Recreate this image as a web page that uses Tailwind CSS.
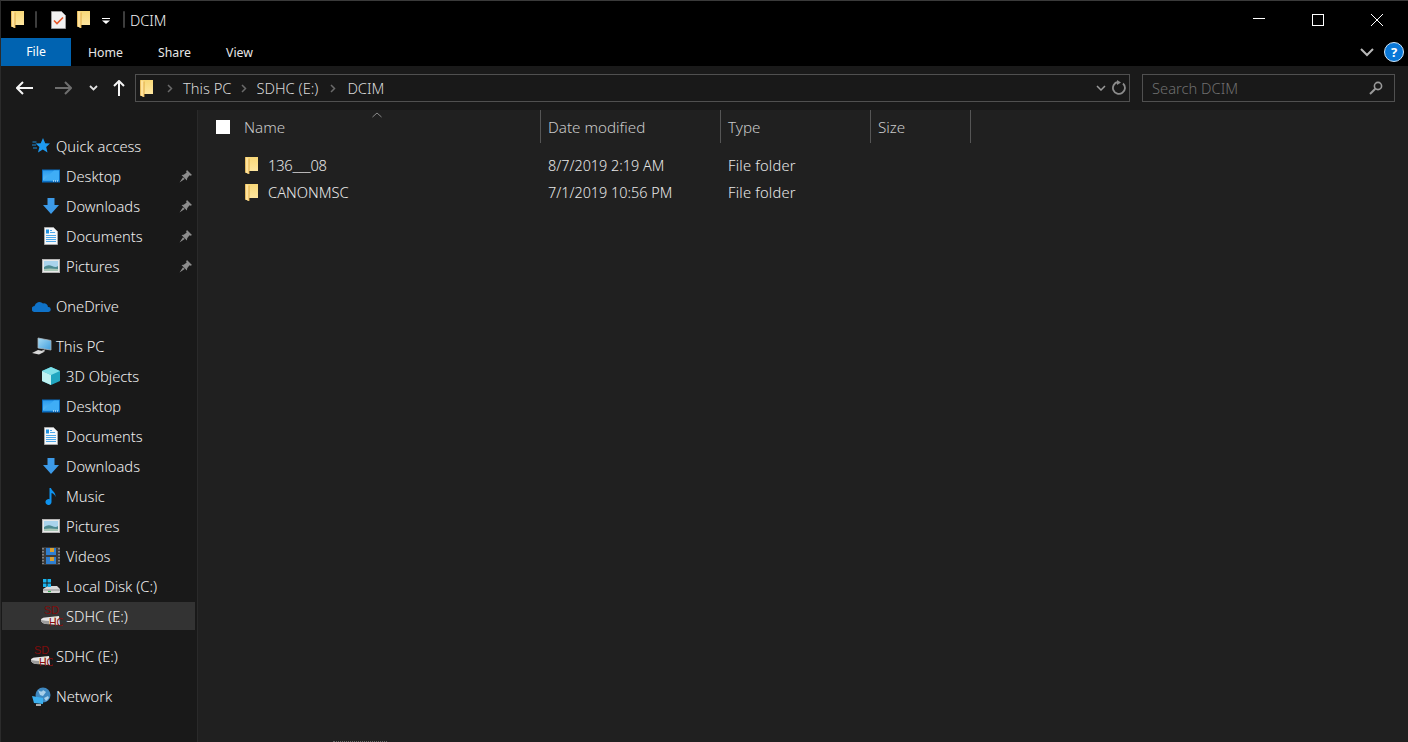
<!DOCTYPE html>
<html lang="en">
<head>
<meta charset="utf-8">
<script src="https://cdn.jsdelivr.net/npm/@tailwindcss/browser@4"></script>
<title>DCIM</title>
</head>
<body class="bg-black">
<svg width="0" height="0" class="absolute">
  <defs>
    <linearGradient id="fg" x1="0" y1="0" x2="0" y2="1"><stop offset="0" stop-color="#f8d878"/><stop offset="1" stop-color="#ffe9a8"/></linearGradient>
    <linearGradient id="dg" x1="0" y1="0" x2="0" y2="1"><stop offset="0" stop-color="#2a9cf0"/><stop offset="1" stop-color="#5cbcf8"/></linearGradient>
    <linearGradient id="pc" x1="0" y1="0" x2="1" y2="1"><stop offset="0" stop-color="#a8dcf4"/><stop offset="1" stop-color="#3f9ede"/></linearGradient>
    <symbol id="folder" viewBox="0 0 13 17"><path d="M0 .5L1 0h12v14H4v3l-3.500-1.500z" fill="url(#fg)"/><path d="M.5 0L4 1.500V17L.5 15.500z" fill="#ffe29a"/><path d="M4 1.500V17" stroke="#dca63e" stroke-width=".9"/><path d="M.5 0v15.500" stroke="#e4b654" stroke-width=".8"/></symbol>
    <symbol id="desk" viewBox="0 0 18 14"><rect width="18" height="13" y=".5" fill="#0b6fc4"/><rect x="1" y="1.500" width="16" height="10" fill="url(#dg)"/><path d="M1 11.500L12 1.500h5v10z" fill="#3fadf6"/><path d="M11 12h1M13 12h1M15 12h1" stroke="#fff" stroke-width="1"/></symbol>
    <symbol id="down" viewBox="0 0 18 16"><path d="M5.500 0h7v7H17l-8 9-8-9h4.500z" fill="#3c9ae8"/></symbol>
    <symbol id="docs" viewBox="0 0 14 18"><path d="M.5.500h9l4 4v13H.500z" fill="#f4f7fa" stroke="#a8a8a8"/><path d="M6 3.500h2M6 5.500h5M2 8.500h10M2 10.500h10M2 12.500h10M2 14.500h10" stroke="#3a9ee8" stroke-width=".9"/><path d="M2 2.500h3v4H2z" fill="#1e90e0"/></symbol>
    <symbol id="pics" viewBox="0 0 18 14"><rect x=".5" y=".5" width="17" height="13" fill="#e8e8e8" stroke="#b4b4b4"/><rect x="2" y="2" width="14" height="10" fill="#a9d3ec"/><path d="M2 8q4-3 8-1t6 0v5H2z" fill="#4d8a90"/><path d="M2 10q5-1 14 0v2H2z" fill="#a7c6b5"/></symbol>
    <symbol id="pin" viewBox="0 0 13 13"><path d="M8 0l5 5-1.500.8-1-.6L8.200 8.300l-.3 2.200L2.500 5l2.200-.3L7.700 2.500l-.6-1zM4 7.300L.5 12.500l5.200-3.500z" fill="#8d8d8d"/></symbol>
    <symbol id="sd" viewBox="0 0 22 24"><path d="M0 16q0-2 4-2.500L18 12l1 9-14-1q-5-1-5-4z" fill="#e6e6e6"/><path d="M0 16q5 1 8 1v3H5q-5-1-5-4z" fill="#9c9c9c"/><path d="M14 12.500v8" stroke="#c9a060" stroke-width="1"/><text x="3" y="9.500" font-family="Liberation Sans" font-size="11" fill="#7f0c0c">SD</text><text x="8" y="21.500" font-family="Liberation Sans" font-size="10.500" fill="#8a0f0f">HC</text></symbol>
  </defs>
</svg>

<div class="w-[1408px] h-[742px] overflow-hidden flex flex-col font-['Noto_Sans','Open_Sans',sans-serif] text-[14.700px] leading-[22px] font-light text-[#f0f0f0] bg-black border-t border-t-[#3a3a3a] border-l border-l-[#2b2b2b] relative">

  <!-- stray pixels of the window behind -->
  <span class="absolute -top-px left-[17px] w-[20px] h-px bg-[#777777]"></span>
  <span class="absolute -top-px left-[72px] w-[20px] h-px bg-[#555555]"></span>
  <span class="absolute -top-px left-[246px] w-[16px] h-px bg-[#666666]"></span>
  <span class="absolute bottom-0 left-[332px] w-[54px] h-px border-b border-dotted border-b-[#666666]"></span>

  <!-- title bar -->
  <div class="h-[37px] flex items-center shrink-0">
    <svg class="w-[13px] h-[17px] ml-[10px]"><use href="#folder"/></svg>
    <span class="w-[2px] h-[17px] bg-[#3d3d3d] ml-[11px] rounded"></span>
    <svg class="w-[15px] h-[18px] ml-[14px]" viewBox="0 0 15 18"><path d="M.5.500h10l4 4v13H.500z" fill="#f2f2f2" stroke="#9c9c9c"/><path d="M3 9.500l3 3 6-6" fill="none" stroke="#e8582a" stroke-width="1.600"/></svg>
    <svg class="w-[13px] h-[17px] ml-[11px]"><use href="#folder"/></svg>
    <svg class="w-[8px] h-[6px] ml-[12px] mt-[2px]" viewBox="0 0 8 6"><path d="M0 .5h8" stroke="#fff"/><path d="M0 2.500h8L4 6z" fill="#fff"/></svg>
    <span class="w-[2px] h-[17px] bg-[#3d3d3d] ml-[13px] rounded"></span>
    <span class="ml-[5px] text-[14.500px] text-[#f2f2f2]">DCIM</span>
    <div class="ml-auto flex items-center">
      <span class="w-[12px] h-px bg-white mr-[47px] -mt-[2px]"></span>
      <span class="w-[12px] h-[12px] border border-white mr-[47px]"></span>
      <svg class="w-[12px] h-[12px] mr-[25px]" viewBox="0 0 12 12"><path d="M0 0l12 12M12 0L0 12" stroke="#fff" stroke-width="1"/></svg>
    </div>
  </div>

  <!-- ribbon tabs -->
  <div class="h-[28px] flex items-center shrink-0 text-[12.300px] font-normal text-[#e6e6e6]">
    <span class="w-[70px] h-full bg-[#0063b1] flex items-center justify-center text-white">File</span>
    <span class="ml-[17px] mt-[1px]">Home</span>
    <span class="ml-[35px] mt-[1px]">Share</span>
    <span class="ml-[35px] mt-[1px]">View</span>
    <div class="ml-auto flex items-center pr-[4px]">
      <svg class="w-[14px] h-[9px] mr-[10px]" viewBox="0 0 14 9"><path d="M1 1l6 6 6-6" fill="none" stroke="#b8b8b8" stroke-width="2"/></svg>
      <span class="w-[20px] h-[20px] rounded-full bg-[#0a78d8] border border-[#cfe6fa] flex items-center justify-center text-white text-[13px] font-bold leading-none">?</span>
    </div>
  </div>

  <!-- address row -->
  <div class="h-[44px] bg-[#1a1a1a] flex items-center shrink-0 pl-[15px] pr-[12px]">
    <svg class="w-[17px] h-[14px]" viewBox="0 0 17 14"><path d="M7 1L1 7l6 6M1 7h16" fill="none" stroke="#f5f5f5" stroke-width="2"/></svg>
    <svg class="w-[17px] h-[14px] ml-[22px]" viewBox="0 0 17 14"><path d="M10 1l6 6-6 6M16 7H0" fill="none" stroke="#6e6e6e" stroke-width="2"/></svg>
    <svg class="w-[9px] h-[6px] ml-[17px]" viewBox="0 0 9 6"><path d="M1 1l3.500 3.500L8 1" fill="none" stroke="#e0e0e0" stroke-width="1.800"/></svg>
    <svg class="w-[12px] h-[16px] ml-[15px]" viewBox="0 0 12 16"><path d="M6 1v15M1 6l5-5 5 5" fill="none" stroke="#f5f5f5" stroke-width="2"/></svg>
    <div class="ml-[10px] w-[995px] h-[28px] border border-[#505050] flex items-center bg-[#191919] text-[#d8d8d8]">
      <svg class="w-[13px] h-[17px] ml-[4px]"><use href="#folder"/></svg>
      <svg class="w-[6px] h-[9px] ml-[14px]" viewBox="0 0 6 9"><path d="M1 1l3.500 3.500L1 8" fill="none" stroke="#6a6a6a" stroke-width="1.500"/></svg>
      <span class="ml-[10px]">This PC</span>
      <svg class="w-[6px] h-[9px] ml-[10px]" viewBox="0 0 6 9"><path d="M1 1l3.500 3.500L1 8" fill="none" stroke="#6a6a6a" stroke-width="1.500"/></svg>
      <span class="ml-[9px]">SDHC (E:)</span>
      <svg class="w-[6px] h-[9px] ml-[12px]" viewBox="0 0 6 9"><path d="M1 1l3.500 3.500L1 8" fill="none" stroke="#6a6a6a" stroke-width="1.500"/></svg>
      <span class="ml-[11px]">DCIM</span>
      <svg class="w-[10px] h-[6px] ml-auto" viewBox="0 0 10 6"><path d="M1 1l4 4 4-4" fill="none" stroke="#9a9a9a" stroke-width="1.500"/></svg>
      <svg class="w-[15px] h-[16px] ml-[6px] mr-[2px]" viewBox="0 0 15 16"><path d="M11 3.500a6 6 0 1 1-5-1.500" fill="none" stroke="#8c8c8c" stroke-width="1.800"/><path d="M5 0l4 2.500L5 5" fill="#8c8c8c"/></svg>
    </div>
    <div class="ml-[12px] w-[253px] h-[28px] border border-[#505050] flex items-center pl-[9px] pr-[11px] text-[#6f6f6f] bg-[#191919]">
      <span>Search DCIM</span>
      <svg class="w-[14px] h-[14px] ml-auto" viewBox="0 0 14 14"><circle cx="9" cy="5" r="3.600" fill="none" stroke="#9a9a9a" stroke-width="1.600"/><path d="M6.300 7.700L1 13" stroke="#9a9a9a" stroke-width="2"/></svg>
    </div>
  </div>

  <!-- main -->
  <div class="flex flex-1 min-h-0">
    <!-- sidebar -->
    <nav class="w-[197px] bg-[#191919] border-r border-r-[#2a2a2a] pt-[21px] shrink-0 flex flex-col">
      <div class="h-[30px] flex items-center pl-[31px]">
        <svg class="w-[18px] h-[16px]" viewBox="0 0 18 16"><path d="M11 0l2.200 5.200 4.800.3-3.800 3.400 1.300 5.600L10.800 11.500 6 14.500l1.400-5.600L3.500 5.500l5.200-.3z" fill="#1e9af0"/><path d="M.5 4h4M0 7h4M1 10h4" stroke="#1e9af0" stroke-width=".9"/></svg>
        <span class="ml-[6px]">Quick access</span>
      </div>
      <div class="h-[30px] flex items-center pl-[41px]"><svg class="w-[18px] h-[14px]"><use href="#desk"/></svg><span class="ml-[6px]">Desktop</span><svg class="w-[13px] h-[13px] ml-auto mr-[5px]"><use href="#pin"/></svg></div>
      <div class="h-[30px] flex items-center pl-[41px]"><svg class="w-[18px] h-[16px]"><use href="#down"/></svg><span class="ml-[6px]">Downloads</span><svg class="w-[13px] h-[13px] ml-auto mr-[5px]"><use href="#pin"/></svg></div>
      <div class="h-[30px] flex items-center pl-[43px]"><svg class="w-[14px] h-[18px]"><use href="#docs"/></svg><span class="ml-[8px]">Documents</span><svg class="w-[13px] h-[13px] ml-auto mr-[5px]"><use href="#pin"/></svg></div>
      <div class="h-[30px] flex items-center pl-[41px]"><svg class="w-[18px] h-[14px]"><use href="#pics"/></svg><span class="ml-[6px]">Pictures</span><svg class="w-[13px] h-[13px] ml-auto mr-[5px]"><use href="#pin"/></svg></div>

      <div class="h-[30px] flex items-center pl-[31px] mt-[10px]">
        <svg class="w-[19px] h-[12px]" viewBox="0 0 19 12"><path d="M3 12a3 3 0 0 1-.5-6A5 5 0 0 1 11 3.500 4 4 0 0 1 16 7a2.500 2.500 0 0 1 .5 5z" fill="#0f72c8"/></svg>
        <span class="ml-[5px]">OneDrive</span>
      </div>

      <div class="h-[30px] flex items-center pl-[31px] mt-[10px]">
        <svg class="w-[20px] h-[18px]" viewBox="0 0 20 18"><path d="M6 1l13 2.500v9.500L6 11z" fill="url(#pc)" stroke="#a8b4bc" stroke-width=".8"/><path d="M0 16l6-3 7 1.500-6 3z" fill="#d8d8d8"/><path d="M13 13l-3 1" stroke="#bbbbbb"/></svg>
        <span class="ml-[4px]">This PC</span>
      </div>
      <div class="h-[30px] flex items-center pl-[41px]">
        <svg class="w-[18px] h-[18px]" viewBox="0 0 18 18"><path d="M9 0l9 4v10l-9 4-9-4V4z" fill="#21a6c0"/><path d="M9 0l9 4-9 4-9-4z" fill="#7fe0e8"/><path d="M0 4l9 4v10l-9-4z" fill="#bff2f2"/></svg>
        <span class="ml-[6px]">3D Objects</span>
      </div>
      <div class="h-[30px] flex items-center pl-[41px]"><svg class="w-[18px] h-[14px]"><use href="#desk"/></svg><span class="ml-[6px]">Desktop</span></div>
      <div class="h-[30px] flex items-center pl-[43px]"><svg class="w-[14px] h-[18px]"><use href="#docs"/></svg><span class="ml-[8px]">Documents</span></div>
      <div class="h-[30px] flex items-center pl-[41px]"><svg class="w-[18px] h-[16px]"><use href="#down"/></svg><span class="ml-[6px]">Downloads</span></div>
      <div class="h-[30px] flex items-center pl-[44px]">
        <svg class="w-[12px] h-[17px]" viewBox="0 0 12 17"><path d="M4.500 0h1.500c.5 3 5 4 4.500 9-.5-2-2-3.500-4-4v9a3 3 0 1 1-2-2.800z" fill="#0f93ee"/></svg>
        <span class="ml-[9px]">Music</span>
      </div>
      <div class="h-[30px] flex items-center pl-[41px]"><svg class="w-[18px] h-[14px]"><use href="#pics"/></svg><span class="ml-[6px]">Pictures</span></div>
      <div class="h-[30px] flex items-center pl-[41px]">
        <svg class="w-[18px] h-[18px]" viewBox="0 0 18 18"><rect width="18" height="18" fill="#3a3a3a"/><path d="M1 1v16M17 1v16" stroke="#9a9a9a" stroke-width="1.500" stroke-dasharray="1.500 1.500"/><rect x="4" y="1" width="10" height="7" fill="#2f7fd0"/><rect x="4" y="10" width="10" height="7" fill="#2f7fd0"/><path d="M8 1h4v4H8zM8 10h4v4H8z" fill="#d8a030"/></svg>
        <span class="ml-[6px]">Videos</span>
      </div>
      <div class="h-[30px] flex items-center pl-[41px]">
        <svg class="w-[19px] h-[16px]" viewBox="0 0 19 16"><path d="M1 11l5-3h9l3 3v3a1 1 0 0 1-1 1H2a1 1 0 0 1-1-1z" fill="#d8d8d8"/><path d="M1 12h17" stroke="#8c8c8c"/><path d="M1 1h3.500v3.500H1zM5.500 1H9v3.500H5.500zM1 5.500h3.500V9H1zM5.500 5.500H9V9H5.500z" fill="#18b4ee"/><path d="M6 13.500h3" stroke="#35a850" stroke-width="1.200"/></svg>
        <span class="ml-[5px]">Local Disk (C:)</span>
      </div>
      <div class="h-[28px] my-px ml-[1px] mr-[2px] flex items-center pl-[39px] bg-[#333333]"><svg class="w-[22px] h-[24px]"><use href="#sd"/></svg><span class="ml-[3px]">SDHC (E:)</span></div>

      <div class="h-[30px] flex items-center pl-[30px] mt-[10px]"><svg class="w-[22px] h-[24px]"><use href="#sd"/></svg><span class="ml-[3px]">SDHC (E:)</span></div>
      <div class="h-[30px] flex items-center pl-[31px] mt-[10px]">
        <svg class="w-[19px] h-[19px]" viewBox="0 0 19 19"><circle cx="11" cy="8" r="7.500" fill="#3f88c0"/><path d="M6 3q4 3 5 0l3 2-3 4-3-1zM12 11l4-2 1 2-3 3z" fill="#a9d0ea"/><path d="M0 9l11 2v6l-9-1z" fill="#3cb0ef"/><path d="M4 18h5" stroke="#ddd" stroke-width="1.500"/></svg>
        <span class="ml-[5px]">Network</span>
      </div>
    </nav>

    <!-- list -->
    <main class="flex-1 bg-[#202020] min-w-0">
      <div class="h-[33px] flex items-stretch relative text-[#c9c9c9] text-[15.200px]">
        <div class="w-[343px] flex items-center border-r border-r-[#555555] pl-[18px]">
          <span class="w-[14px] h-[14px] bg-white"></span>
          <span class="ml-[14px] mt-[1px]">Name</span>
        </div>
        <div class="w-[180px] flex items-center border-r border-r-[#555555] pl-[7px]"><span class="mt-[1px]">Date modified</span></div>
        <div class="w-[150px] flex items-center border-r border-r-[#555555] pl-[7px]"><span class="mt-[1px]">Type</span></div>
        <div class="w-[100px] flex items-center border-r border-r-[#555555] pl-[7px]"><span class="mt-[1px]">Size</span></div>
        <svg class="absolute left-[174px] top-[2px] w-[10px] h-[6px]" viewBox="0 0 10 6"><path d="M.5 5L5 1l4.500 4" fill="none" stroke="#8a8a8a"/></svg>
      </div>
      <div class="mt-[9px] text-[#e8e8e8]">
        <div class="h-[27px] flex items-center">
          <div class="w-[343px] flex items-center pl-[47px]"><svg class="w-[13px] h-[17px]"><use href="#folder"/></svg><span class="ml-[10px] -translate-y-px tracking-[-0.2px]">136___08</span></div>
          <div class="w-[180px] pl-[7px] text-[14.400px]">8/7/2019 2:19 AM</div>
          <div class="pl-[7px] -translate-y-px tracking-[0.2px]">File folder</div>
        </div>
        <div class="h-[27px] flex items-center">
          <div class="w-[343px] flex items-center pl-[47px]"><svg class="w-[13px] h-[17px]"><use href="#folder"/></svg><span class="ml-[10px] -translate-y-px">CANONMSC</span></div>
          <div class="w-[180px] pl-[7px] text-[14.400px]">7/1/2019 10:56 PM</div>
          <div class="pl-[7px] -translate-y-px tracking-[0.2px]">File folder</div>
        </div>
      </div>
    </main>
  </div>
</div>
</body>
</html>
